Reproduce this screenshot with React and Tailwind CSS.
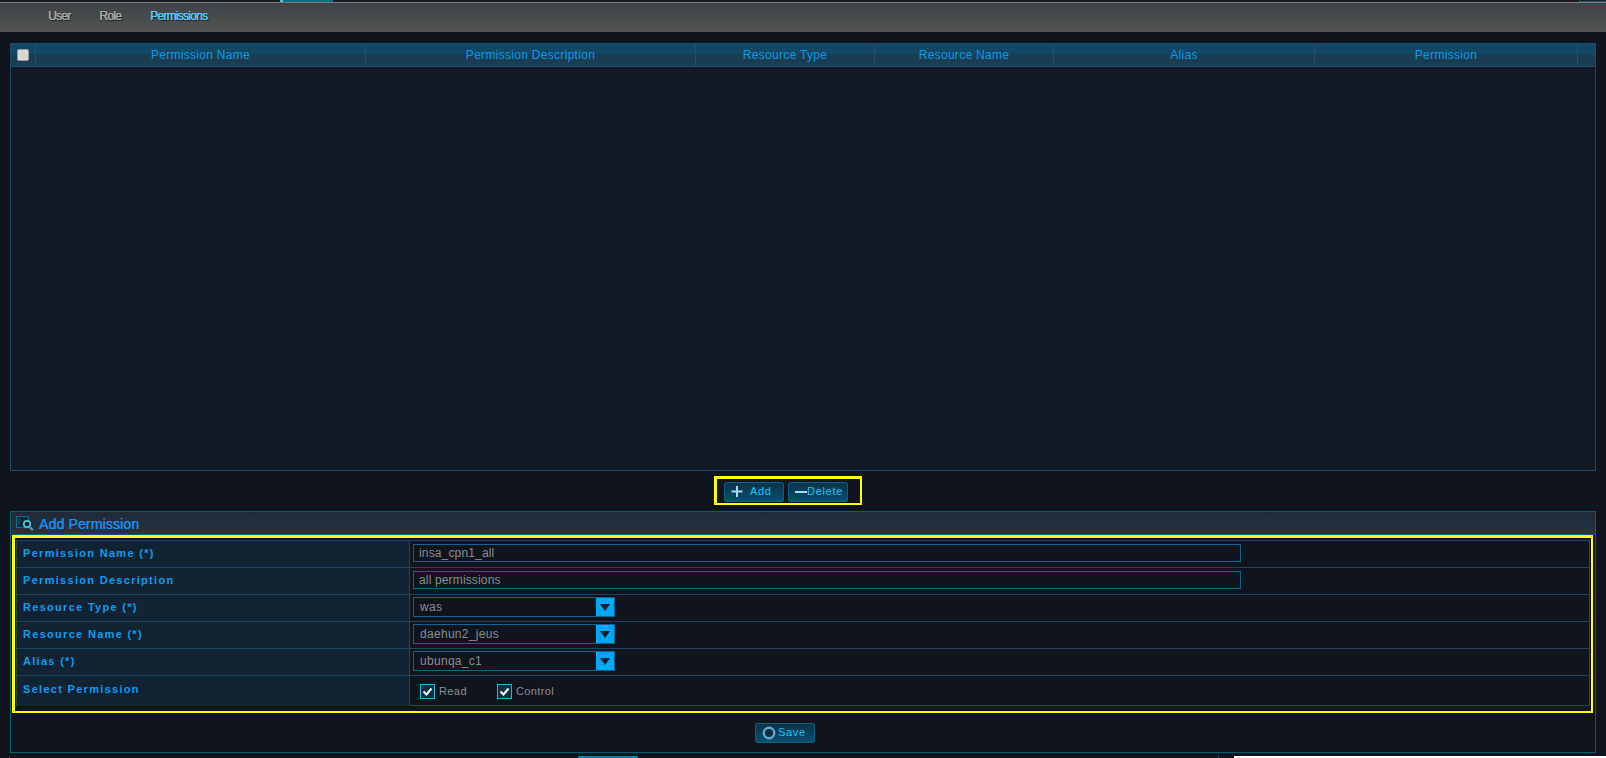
import React from "react";

const columns = [
  { name: "Permission Name", width: "w-[330px]" },
  { name: "Permission Description", width: "w-[330px]" },
  { name: "Resource Type", width: "w-[179px]" },
  { name: "Resource Name", width: "w-[179px]" },
  { name: "Alias", width: "w-[261px]" },
  { name: "Permission", width: "w-[263px]" },
];

function Plus() {
  return (
    <svg width="14" height="14" viewBox="0 0 14 14" className="shrink-0">
      <path d="M7 1v11M1.5 6.5h11" stroke="#a8dcf0" strokeWidth="2" />
    </svg>
  );
}

function Minus() {
  return (
    <svg width="12" height="14" viewBox="0 0 12 14" className="shrink-0">
      <path d="M0 7h12" stroke="#a8dcf0" strokeWidth="2" />
    </svg>
  );
}

function Ring() {
  return (
    <svg width="14" height="14" viewBox="0 0 14 14" className="shrink-0">
      <circle cx="7" cy="7" r="5.2" fill="#0d2f42" stroke="#62a8cc" strokeWidth="2.4" />
    </svg>
  );
}

function SearchIcon() {
  return (
    <svg width="18" height="15" viewBox="0 0 18 15" className="shrink-0">
      <rect x="0.5" y="0.5" width="12" height="11" fill="#0c2c3b" stroke="#0d7088" />
      <path d="M3 3v6" stroke="#2a8a9c" strokeDasharray="1 1" />
      <circle cx="11" cy="8" r="3.2" fill="#101d28" stroke="#4fc3d8" strokeWidth="1.7" />
      <path d="M13.2 10.5l3.6 3.6" stroke="#3aa6bc" strokeWidth="2.2" />
    </svg>
  );
}

function ActionButton({ icon, label, className = "" }) {
  return (
    <button
      className={`h-5 w-[60px] shrink-0 flex items-center rounded-[2px] border border-[#0c5f86] bg-gradient-to-b from-[#0b3348] to-[#06506f] text-[11px] tracking-[0.7px] text-[#1cc4f5] ${className}`}
    >
      {icon}
      {label}
    </button>
  );
}

function Row({ label, children, last }) {
  return (
    <div className={`flex ${last ? "h-[30px]" : "h-[27px] border-b border-[#1d4560]"}`}>
      <div
        className={`w-[393px] shrink-0 flex items-center pl-[6px] border-r border-[#1d4560] bg-[#122334] text-[11px] font-bold tracking-[1.3px] text-[#0a9df0] ${last ? "pb-[3px]" : "pb-[2px]"}`}
      >
        {label}
      </div>
      <div className={`flex-1 flex items-center pl-[3px] ${last ? "" : "pb-[2px]"}`}>{children}</div>
    </div>
  );
}

function TextBox({ value }) {
  return (
    <div className="w-[828px] h-[18px] flex items-center pl-[5px] border border-[#0e6390] text-xs tracking-[0.15px] text-[#8a8d90]">
      {value}
    </div>
  );
}

function SelectBox({ value }) {
  return (
    <div className="w-[202px] h-5 flex items-center justify-between pl-[6px] border border-[#0e6390] text-xs tracking-[0.3px] text-[#8a8d90]">
      {value}
      <span className="w-[18px] h-full flex items-center justify-center bg-[#00a8f3]">
        <span className="w-0 h-0 border-x-[5px] border-x-transparent border-t-[7px] border-t-[#10202c]" />
      </span>
    </div>
  );
}

function Check({ label, className = "" }) {
  return (
    <label className={`flex items-center gap-1 text-[11px] tracking-[0.4px] text-[#8a8d90] ${className}`}>
      <span className="w-[15px] h-[15px] flex items-center justify-center border border-[#1fb6d8] bg-[#10303f]">
        <svg width="11" height="11" viewBox="0 0 11 11">
          <path d="M1.5 5.5l3 3 5-6" fill="none" stroke="#ffffff" strokeWidth="2" />
        </svg>
      </span>
      {label}
    </label>
  );
}

export default function App() {
  return (
    <div className="relative w-[1606px] h-[758px] overflow-hidden flex flex-col bg-[#10141d] font-['Liberation_Sans',sans-serif]">
      {/* top strip and tabs */}
      <div className="h-[2px] bg-[#1b1d20]" />
      <div className="h-px bg-[#77797a]" />
      <div className="h-[29px] flex items-center pl-[48px] gap-[29px] pb-[3px] bg-gradient-to-b from-[#3f4345] to-[#525454] text-xs tracking-[-0.75px] [text-shadow:0.4px_0_0_currentColor,1px_1px_1px_#1c1c1c]">
        <span className="text-[#a9a8a4]">User</span>
        <span className="text-[#a9a8a4]">Role</span>
        <span className="text-[#58c8f5]">Permissions</span>
      </div>

      {/* permissions grid */}
      <div className="mt-[11px] mx-[10px] h-[428px] w-[1586px] border border-[#1d4a68] bg-[#121924]">
        <div className="h-[23px] flex border-b border-[#24506e] bg-[linear-gradient(#134766_0,#134766_45%,#1b3d54_45%,#1b3d54_100%)] text-xs tracking-[0.3px] text-[#0a9be6]">
          <div className="w-[25px] shrink-0 flex items-center justify-center border-r border-[#27506c]">
            <span className="w-3 h-3 rounded-[2px] bg-[#d8d8d8] border border-[#9a9a9a]" />
          </div>
          {columns.map((col) => (
            <div
              key={col.name}
              className={`${col.width} shrink-0 flex items-center justify-center border-r border-[#27506c]`}
            >
              {col.name}
            </div>
          ))}
        </div>
      </div>

      {/* add / delete */}
      <div className="mt-[5px] self-start ml-[714px] w-[148px] h-[29px] flex items-center gap-1 pl-[7px] pt-px border-t-[3px] border-l-[3px] border-r-2 border-b-2 border-[#ffff00]">
        <ActionButton icon={<Plus />} label="Add" className="pl-[5px] gap-[6px]" />
        <ActionButton icon={<Minus />} label="Delete" className="pl-[6px]" />
      </div>

      {/* add permission form */}
      <div className="mt-[6px] ml-[10px] w-[1586px] h-[242px] flex flex-col border border-[#03606f]">
        <div className="h-[23px] shrink-0 flex items-center gap-[5px] pl-[5px] pt-px border-b border-[#03606f] bg-gradient-to-b from-[#1e2a38] to-[#263343] text-sm tracking-[0.15px] text-[#1a8ff0] [text-shadow:0.3px_0_0_currentColor]">
          <SearchIcon />
          Add Permission
        </div>
        <div className="ml-px w-[1581px] h-[178px] shrink-0 border-t-[3px] border-l-[3px] border-r-2 border-b-2 border-[#ffff00] pt-[2px] pl-px">
          <div className="h-[166px] w-[1574px] border border-[#26455c]">
            <Row label="Permission Name (*)">
              <TextBox value="insa_cpn1_all" />
            </Row>
            <Row label="Permission Description">
              <TextBox value="all permissions" />
            </Row>
            <Row label="Resource Type (*)">
              <SelectBox value="was" />
            </Row>
            <Row label="Resource Name (*)">
              <SelectBox value="daehun2_jeus" />
            </Row>
            <Row label="Alias (*)">
              <SelectBox value="ubunqa_c1" />
            </Row>
            <Row label="Select Permission" last>
              <Check label="Read" className="ml-[7px]" />
              <Check label="Control" className="ml-[30px]" />
            </Row>
          </div>
        </div>
        <div className="flex-1 flex items-center pl-[744px]">
          <ActionButton icon={<Ring />} label="Save" className="pl-[6px] gap-[2px]" />
        </div>
      </div>

      {/* cut-off bits along the edges of the capture */}
      <div className="absolute left-[9px] bottom-0 w-px h-[2px] bg-[#0c5f86]" />
      <div className="absolute left-[578px] bottom-0 w-[60px] h-[2px] bg-[#0c7fa8]" />
      <div className="absolute left-[1218px] bottom-0 w-px h-[2px] bg-[#0c5f86]" />
      <div className="absolute left-[1234px] right-0 bottom-0 h-[2px] bg-white" />
      <div className="absolute left-[280px] top-0 w-[3px] h-[2px] bg-[#4fc3f7]" />
      <div className="absolute left-[283px] top-0 w-[50px] h-[2px] bg-[#0f6f80]" />
      <div className="absolute left-[1579px] top-0 right-0 h-[2px] border-b border-l border-[#0f5f78]" />
    </div>
  );
}
